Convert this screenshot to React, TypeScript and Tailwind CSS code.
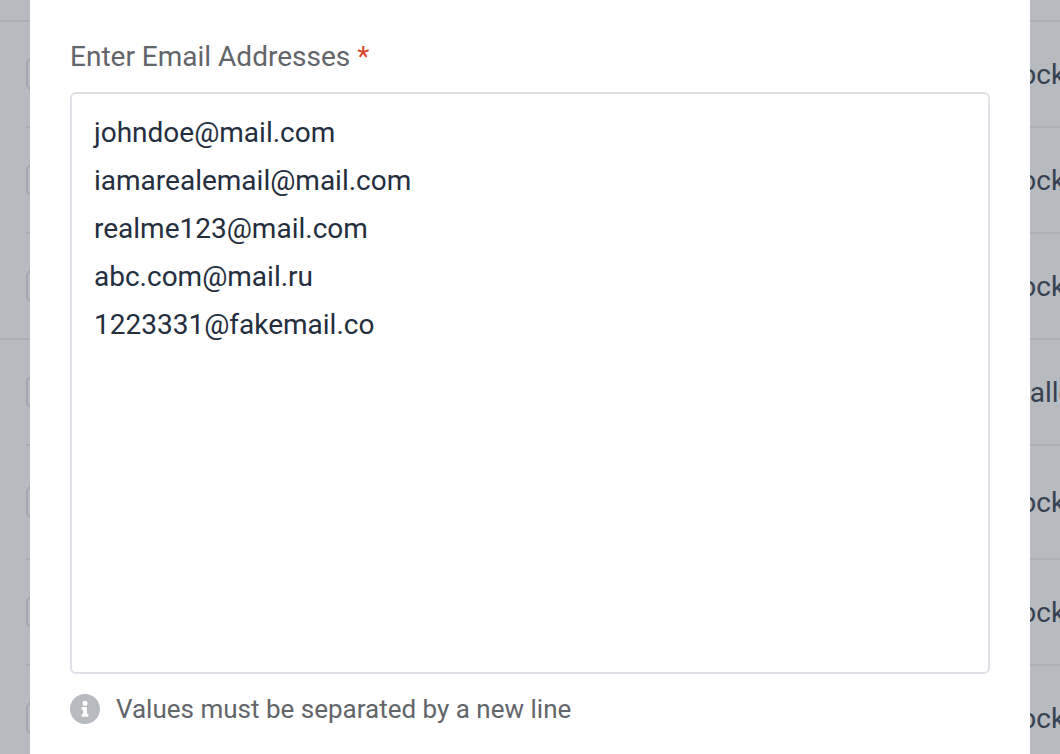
import { useState } from "react";

type Rule = {
  id: number,
  action: string,
  height: string,
  groupEnd?: boolean
};

const rules: Rule[] = [
  { id: 1, action: "Block", height: "h-[106px]" },
  { id: 2, action: "Block", height: "h-[106px]" },
  { id: 3, action: "Block", height: "h-[106px]", groupEnd: true },
  { id: 4, action: "Challenge", height: "h-[106px]" },
  { id: 5, action: "Block", height: "h-[114px]" },
  { id: 6, action: "Block", height: "h-[106px]" },
  { id: 7, action: "Block", height: "h-[106px]" },
];

const initialEmails = [
  "johndoe@mail.com",
  "iamarealemail@mail.com",
  "realme123@mail.com",
  "abc.com@mail.ru",
  "1223331@fakemail.co",
].join("\n");

const InfoIcon = () => (
  <svg className="w-[30px] h-[30px] shrink-0" viewBox="8 8 496 496" fill="#b7babf" aria-hidden="true">
    <path d="M256 8C119 8 8 119 8 256s111 248 248 248 248-111 248-248S393 8 256 8zm0 110a42 42 0 110 84 42 42 0 010-84zm56 254a12 12 0 01-12 12h-88a12 12 0 01-12-12v-24a12 12 0 0112-12h12v-64h-12a12 12 0 01-12-12v-24a12 12 0 0112-12h64a12 12 0 0112 12v100h12a12 12 0 0112 12v24z" />
  </svg>
);

const RulesTable = () => (
  <table className="w-full table-fixed border-separate border-spacing-0 text-[28px] text-[#364152]">
    <colgroup>
      <col className="w-[26px]" />
      <col />
      <col className="w-16" />
    </colgroup>
    <tbody>
      <tr className="h-[22px]">
        <td colSpan={3} className="border-b-2 border-[#abafb5] p-0"></td>
      </tr>
      {rules.map((rule) => (
        <tr key={rule.id} className={rule.height}>
          <td className={rule.groupEnd ? "border-b-2 border-[#abafb5] p-0" : "p-0"}></td>
          <td className="border-b-2 border-[#abafb5] p-0">
            <input
              type="checkbox"
              aria-label={`Select rule ${rule.id}`}
              className="block size-8 appearance-none rounded-md border-2 border-[#a2a6ae]"
            />
          </td>
          <td className="border-b-2 border-[#abafb5] p-0 pt-0.5 whitespace-nowrap">{rule.action}</td>
        </tr>
      ))}
    </tbody>
  </table>
);

const EmailModal = () => {
  const [emails, setEmails] = useState(initialEmails);

  return (
    <div role="dialog" aria-label="Email addresses" className="absolute inset-y-0 inset-x-[30px] flex flex-col bg-white px-10 pt-[37px] pb-[27px]">
      <label htmlFor="emails" className="mb-[15px] text-[28px] leading-10 text-[#626569]">
        Enter Email Addresses <span className="text-[#d8472f]">*</span>
      </label>
      <textarea
        id="emails"
        value={emails}
        onChange={(e) => setEmails(e.target.value)}
        spellCheck={false}
        className="w-full flex-1 resize-none rounded-md border-2 border-[#dee2e6] px-[22px] py-[15px] text-[28px] leading-[48px] text-[#242e3e] outline-none"
      />
      <div className="mt-[17px] flex items-center gap-4">
        <InfoIcon />
        <p className="text-[26px] leading-9 text-[#626569]">Values must be separated by a new line</p>
      </div>
    </div>
  );
};

const App = () => {
  return (
    <main className="relative h-screen overflow-hidden bg-[#b7babf] font-['Roboto',sans-serif]">
      <RulesTable />
      <EmailModal />
    </main>
  );
}

export default App;
